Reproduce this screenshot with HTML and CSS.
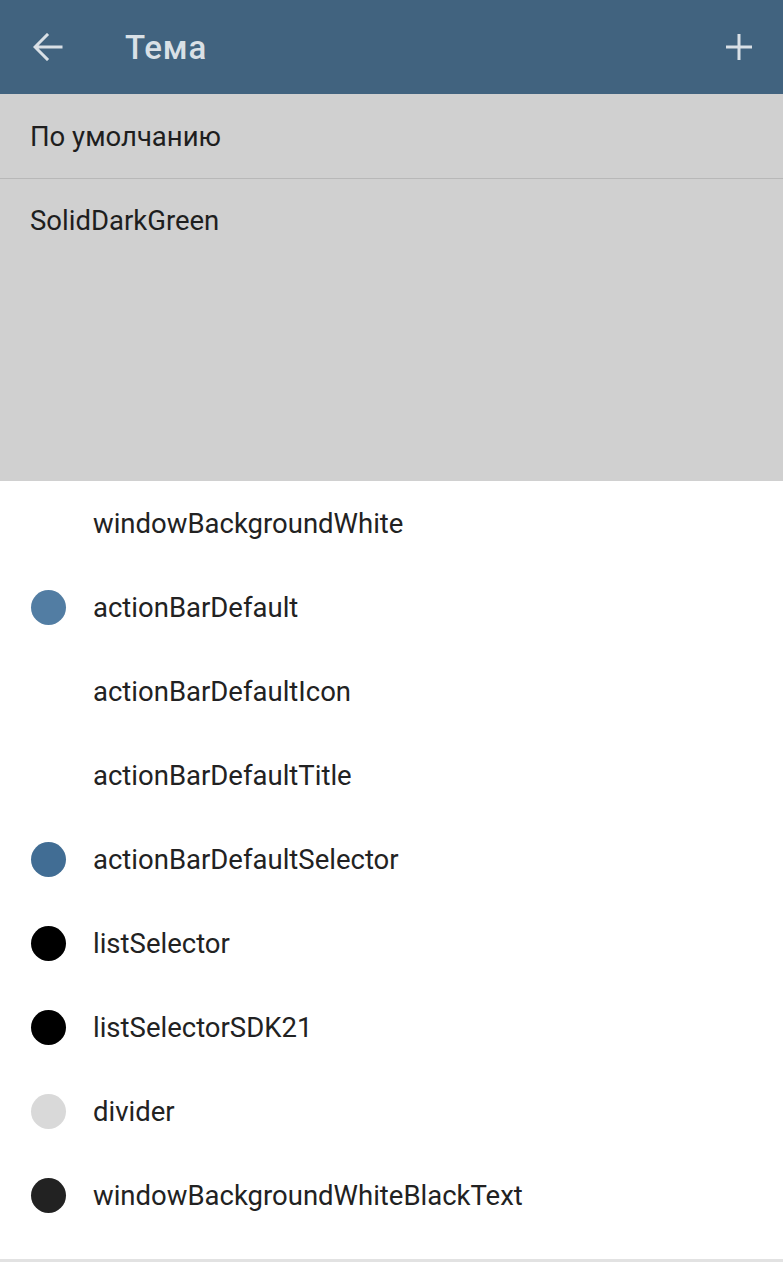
FILE: index.html
```html
<!DOCTYPE html>
<html lang="ru">
<head>
<meta charset="utf-8">
<title>Тема</title>
<link rel="stylesheet" href="styles.css">
</head>
<body>
<div class="app">
  <header class="bar">
    <svg class="icon back" width="30" height="28" viewBox="0 0 30 28"><path d="M28 14H3M14 2L2 14l12 12" fill="none" stroke="currentColor" stroke-width="3" stroke-linecap="square"/></svg>
    <h1 class="title">Тема</h1>
    <svg class="icon plus" width="28" height="28" viewBox="0 0 28 28"><path d="M14 1v26M1 14h26" fill="none" stroke="currentColor" stroke-width="3"/></svg>
  </header>
  <section class="themes">
    <div class="theme">По умолчанию</div>
    <div class="theme theme-big">SolidDarkGreen</div>
  </section>
  <ul class="colors">
    <li class="color"><span class="dot dot-none"></span>windowBackgroundWhite</li>
    <li class="color"><span class="dot" style="background:#527da3"></span>actionBarDefault</li>
    <li class="color"><span class="dot dot-none"></span>actionBarDefaultIcon</li>
    <li class="color"><span class="dot dot-none"></span>actionBarDefaultTitle</li>
    <li class="color"><span class="dot" style="background:#416d94"></span>actionBarDefaultSelector</li>
    <li class="color"><span class="dot" style="background:#000000"></span>listSelector</li>
    <li class="color"><span class="dot" style="background:#000000"></span>listSelectorSDK21</li>
    <li class="color"><span class="dot" style="background:#d9d9d9"></span>divider</li>
    <li class="color"><span class="dot" style="background:#222222"></span>windowBackgroundWhiteBlackText</li>
  </ul>
  <div class="bottom-line"></div>
</div>
</body>
</html>
```
FILE: styles.css
```css
* { box-sizing: border-box; }
html, body { margin: 0; padding: 0; }
body {
  font-family: Roboto, "Noto Sans", sans-serif;
  background: #ffffff;
  color: #222222;
}
.app { width: 783px; height: 1280px; display: flex; flex-direction: column; }
.bar {
  height: 94px;
  background: #41637f;
  color: #d9e0e6;
  display: flex;
  align-items: center;
  padding: 0 30px 0 33px;
}
.icon { display: block; flex: none; }
.back { margin-right: 62px; }
.title {
  margin: 0;
  flex: 1;
  font-size: 33px;
  font-weight: 500;
  letter-spacing: 0.8px;
  color: #d9e0e6;
}
.themes { background: #d0d0d0; height: 387px; }
.theme {
  height: 84px;
  display: flex;
  align-items: center;
  padding-left: 30px;
  font-size: 27.5px;
  color: #1e1e1e;
}
.theme + .theme { border-top: 1px solid #b8b8b8; height: 303px; align-items: flex-start; padding-top: 25px; }
.colors { list-style: none; margin: 0; padding: 0; }
.color {
  height: 84px;
  display: flex;
  align-items: center;
  padding-left: 31px;
  font-size: 27.5px;
  color: #222222;
}
.dot {
  width: 35px;
  height: 35px;
  border-radius: 50%;
  margin-right: 27px;
  flex: none;
}
.dot-none { background: transparent; }
.bottom-line { margin-top: 22px; height: 3px; background: #e2e2e2; }
```
